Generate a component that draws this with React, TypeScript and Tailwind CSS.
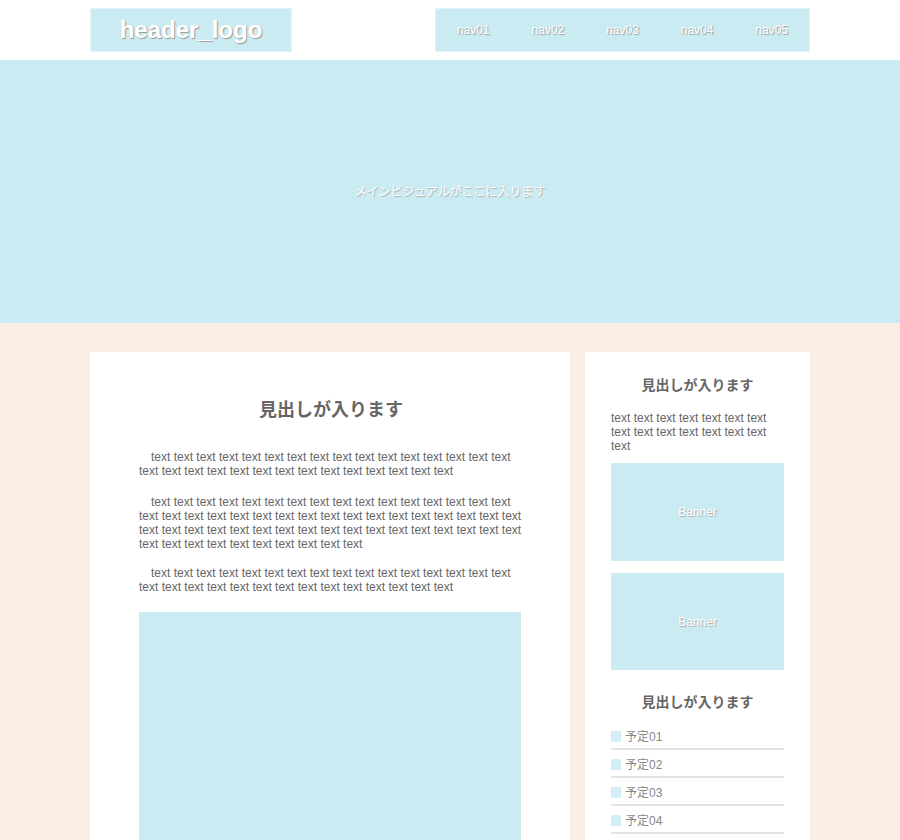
const navs = ['nav01', 'nav02', 'nav03', 'nav04', 'nav05']
const schedules = ['予定01', '予定02', '予定03', '予定04']

const words = (n: number) => Array(n).fill('text').join(' ')

const App = () => {
  return (
    <div className="min-h-[840px] bg-[#fcede4] font-['Liberation_Sans','Noto_Sans_CJK_JP',sans-serif] text-[#666]">
      <header className="bg-white">
        <div className="mx-auto flex h-[60px] w-[720px] items-start justify-between pt-[8px]">
          <h1 className="flex h-[44px] w-[202px] items-center justify-center border border-[#e2f4f8] bg-[#cbebf2] text-[24px] font-bold text-white [text-shadow:1px_1px_1px_#999]">
            header_logo
          </h1>
          <nav className="flex h-[44px] w-[375px] border border-[#e2f4f8] bg-[#cbebf2]">
            {navs.map((n) => (
              <a
                key={n}
                className="flex w-[75px] items-center justify-center text-[12px] text-white [text-shadow:1px_1px_1px_#999]"
              >
                {n}
              </a>
            ))}
          </nav>
        </div>
      </header>

      <section className="flex h-[263px] items-center justify-center bg-[#cbebf2]">
        <p className="text-[12px] text-white [text-shadow:1px_1px_1px_#aaa]">
          メインビジュアルがここに入ります
        </p>
      </section>

      <div className="mx-auto flex w-[720px] items-start gap-[15px] pt-[29px]">
        <main className="w-[480px] bg-white pl-[49px] pr-[47px] pt-[47px]">
          <h2 className="text-center text-[18px] font-bold leading-[22px]">見出しが入ります</h2>
          <div className="mt-[29px] w-[383px] text-[12px] leading-[normal]">
            <p className="indent-[12px]">{words(30)}</p>
            <p className="mt-[17px] indent-[12px]">{words(60)}</p>
            <p className="mt-[15px] indent-[12px]">{words(30)}</p>
          </div>
          <div className="mt-[18px] h-[260px] w-[382px] bg-[#cbebf2]"></div>
        </main>

        <aside className="w-[225px] bg-white px-[26px] pt-[24px] pb-[20px]">
          <h2 className="text-center text-[14px] font-bold leading-[18px]">見出しが入ります</h2>
          <p className="mt-[17px] text-[12px] leading-[normal]">{words(15)}</p>
          <div className="mt-[10px] flex h-[98px] items-center justify-center bg-[#cbebf2] text-[12px] text-white [text-shadow:1px_1px_1px_#aaa]">
            Banner
          </div>
          <div className="mt-[12px] flex h-[97px] items-center justify-center bg-[#cbebf2] text-[12px] text-white [text-shadow:1px_1px_1px_#aaa]">
            Banner
          </div>
          <h2 className="mt-[23px] text-center text-[14px] font-bold leading-[18px]">見出しが入ります</h2>
          <ul className="mt-[11px]">
            {schedules.map((s) => (
              <li
                key={s}
                className="flex h-[28px] items-center gap-[4px] border-b-2 border-[#e2e2e2] pt-[3px] text-[12px] text-[#888]"
              >
                <span className="h-[11px] w-[10px] bg-[#d3eef4]"></span>
                {s}
              </li>
            ))}
          </ul>
        </aside>
      </div>
    </div>
  )
}
export default App
